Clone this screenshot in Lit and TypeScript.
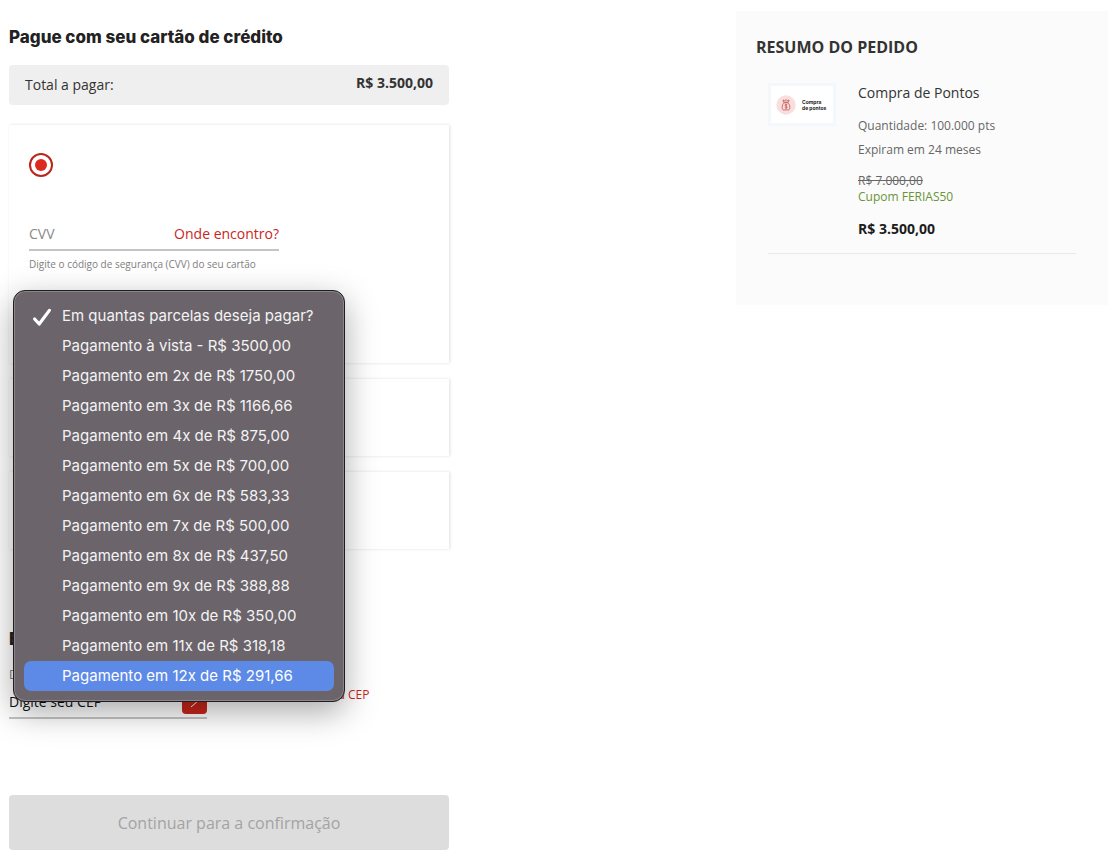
import { LitElement, html, css, svg } from "lit";
import { customElement, property, state } from "lit/decorators.js";
import { classMap } from "lit/directives/class-map.js";

const INSTALLMENTS = [
  "Em quantas parcelas deseja pagar?",
  "Pagamento à vista - R$ 3500,00",
  "Pagamento em 2x de R$ 1750,00",
  "Pagamento em 3x de R$ 1166,66",
  "Pagamento em 4x de R$ 875,00",
  "Pagamento em 5x de R$ 700,00",
  "Pagamento em 6x de R$ 583,33",
  "Pagamento em 7x de R$ 500,00",
  "Pagamento em 8x de R$ 437,50",
  "Pagamento em 9x de R$ 388,88",
  "Pagamento em 10x de R$ 350,00",
  "Pagamento em 11x de R$ 318,18",
  "Pagamento em 12x de R$ 291,66",
];

/** Installment drop-down: the native select plus its open menu. */
@customElement("installment-select")
export class InstallmentSelect extends LitElement {
  static styles = css`
    :host {
      display: block;
      position: relative;
    }
    .native {
      display: block;
      width: 100%;
      height: 32px;
      border: 0;
      border-bottom: 2px solid #c4c4c4;
      background: transparent;
      color: #757575;
      font: 14px/20px "Open Sans", sans-serif;
    }
    .menu {
      position: absolute;
      z-index: 10;
      top: -10px;
      left: -16px;
      box-sizing: border-box;
      width: 332px;
      padding: 10px;
      border: 1px solid #1f1d1f;
      border-radius: 12px;
      background: #6b656b;
      box-shadow:
        inset 0 0 0 1px #8b868b,
        0 10px 32px rgba(0, 0, 0, 0.34);
    }
    .option {
      display: flex;
      align-items: center;
      width: 100%;
      height: 30px;
      padding: 0 8px;
      border: 0;
      border-radius: 7px;
      background: transparent;
      color: #f4f3f4;
      font: 400 15px/20px Inter, "Liberation Sans", sans-serif;
      text-align: left;
      white-space: nowrap;
    }
    .option.active {
      background: #5c8ae6;
      color: #fff;
    }
    .mark {
      flex: 0 0 30px;
      height: 20px;
    }
    .mark svg {
      display: block;
      width: 20px;
      height: 22px;
    }
  `;

  @state() private selected = 0;
  @state() private active = 12;

  render() {
    return html`
      <select class="native" aria-label="Parcelas">
        ${INSTALLMENTS.map((t, i) => html`<option ?selected=${i === this.selected}>${t}</option>`)}
      </select>
      <div class="menu" role="listbox" aria-label="Parcelas">
        ${INSTALLMENTS.map(
          (t, i) => html`<button
            type="button"
            role="option"
            aria-selected=${i === this.selected ? "true" : "false"}
            class=${classMap({ option: true, active: i === this.active })}
            @mouseenter=${() => (this.active = i)}
            @click=${() => (this.selected = i)}
          >
            <span class="mark"
              >${i === this.selected
                ? html`<svg viewBox="0 0 20 22" aria-hidden="true">
                    ${svg`<path d="M2.6 13 L7.2 18 L17.4 4.4" fill="none" stroke="#fff" stroke-width="3.2" stroke-linecap="round" stroke-linejoin="round"/>`}
                  </svg>`
                : ""}</span
            >${t}
          </button>`,
        )}
      </div>
    `;
  }
}

/** Order summary shown beside the payment form. */
@customElement("order-summary")
export class OrderSummary extends LitElement {
  static styles = css`
    :host {
      display: block;
      box-sizing: border-box;
      padding: 24px 32px 51px 20px;
      background: #fbfbfb;
      color: #333;
      font: 12px/16px "Open Sans", sans-serif;
    }
    .title {
      margin: 0 0 24px;
      font-size: 16px;
      line-height: 24px;
      font-weight: 700;
    }
    .item {
      display: grid;
      grid-template-columns: 68px 1fr;
      column-gap: 22px;
      margin-left: 12px;
      padding-bottom: 16px;
      border-bottom: 1px solid #e9e9e9;
    }
    .thumb {
      display: flex;
      align-items: center;
      gap: 6px;
      box-sizing: border-box;
      width: 68px;
      height: 43px;
      padding: 0 5px;
      border: 3px solid #f5f8fb;
      background: #fff;
      color: #222;
      font: 700 5px/6px Inter, sans-serif;
    }
    .thumb svg {
      flex: none;
      width: 20px;
      height: 20px;
    }
    .name {
      margin: 0 0 11px;
      font-size: 14px;
      line-height: 20px;
      font-weight: 400;
    }
    .line {
      margin: 0;
      line-height: 24px;
      color: #666;
    }
    .old {
      display: block;
      margin-top: 11px;
      color: #666;
    }
    .coupon {
      margin: 0 0 16px;
      color: #6a9437;
    }
    .price {
      margin: 0;
      font-size: 14px;
      font-weight: 700;
      color: #1c1c1c;
    }
  `;

  @property() price = "";

  render() {
    return html`
      <h2 class="title">RESUMO DO PEDIDO</h2>
      <div class="item">
        <div class="thumb">
          <svg viewBox="0 0 20 20" aria-hidden="true">
            ${svg`<circle cx="10" cy="10" r="9.7" fill="#f8dedd"/>
            <g fill="none" stroke="#c4504b" stroke-width="0.8" stroke-linejoin="round">
              <path d="M7.6 7.2 L7 5 L8.6 5.6 L10 4.8 L11.4 5.6 L13 5 L12.4 7.2 Z"/>
              <path d="M8 7.8 H12 C14.3 10 14.5 14.7 12.4 14.9 H7.6 C5.5 14.7 5.7 10 8 7.8 Z"/>
              <path d="M11.3 9.8 C10.6 9.2 9 9.3 9 10.3 C9 11.6 11.3 10.9 11.3 12.2 C11.3 13.2 9.5 13.3 8.8 12.6 M10.1 8.9 V13.7"/>
            </g>`}
          </svg>
          <span>Compra<br />de pontos</span>
        </div>
        <div>
          <h3 class="name">Compra de Pontos</h3>
          <p class="line">Quantidade: 100.000 pts</p>
          <p class="line">Expiram em 24 meses</p>
          <s class="old">R$ 7.000,00</s>
          <p class="coupon">Cupom FERIAS50</p>
          <p class="price">${this.price}</p>
        </div>
      </div>
    `;
  }
}

@customElement("app-root")
export class AppRoot extends LitElement {
  static styles = css`
    :host {
      display: block;
      color: #333;
      font: 14px/20px "Open Sans", sans-serif;
    }
    .page {
      display: flex;
      justify-content: space-between;
      align-items: flex-start;
      gap: 24px;
      padding: 11px 12px 7px 9px;
    }
    .pay {
      flex: 0 1 440px;
      min-width: 0;
    }
    .summary {
      flex: 0 1 372px;
    }
    .heading {
      margin: 0;
      color: #222;
      font: 800 17px/24px Inter, sans-serif;
    }
    .pay > .heading:first-child {
      padding-top: 14px;
    }
    .total {
      display: flex;
      justify-content: space-between;
      margin-top: 16px;
      padding: 8px 16px;
      border-radius: 4px;
      background: #efefef;
      line-height: 24px;
    }
    .total strong {
      line-height: 20px;
    }
    .cards {
      display: grid;
      gap: 16px;
      margin-top: 20px;
    }
    .card {
      box-sizing: border-box;
      min-height: 77px;
      padding: 0 20px;
      background: #fff;
      box-shadow: 1px 0 3px rgba(0, 0, 0, 0.13);
    }
    .card.open {
      min-height: 238px;
      padding-top: 28px;
    }
    .radio {
      display: grid;
      place-items: center;
      appearance: none;
      width: 24px;
      height: 24px;
      margin: 0;
      border: 2px solid #b9261c;
      border-radius: 50%;
      background: #fff;
    }
    .radio::before {
      content: "";
      width: 12px;
      height: 12px;
      border-radius: 50%;
      background: #dc2b1e;
    }
    .fields {
      width: 250px;
      max-width: 100%;
    }
    .cvv {
      display: flex;
      align-items: center;
      box-sizing: border-box;
      height: 32px;
      margin-top: 42px;
      border-bottom: 2px solid #c4c4c4;
    }
    .input {
      flex: 1 1 0;
      min-width: 0;
      padding: 0;
      border: 0;
      outline: 0;
      background: transparent;
      color: #111;
      font: 14px/20px "Open Sans", sans-serif;
    }
    .input::placeholder {
      color: #8a8a8a;
      opacity: 1;
    }
    .link {
      color: #c8261c;
      text-decoration: none;
    }
    .hint {
      display: block;
      margin: 5px 0 28px;
      color: #808080;
      font-size: 10px;
      line-height: 16px;
    }
    .address {
      margin-top: 78px;
    }
    .label {
      display: block;
      margin-top: 16px;
      color: #808080;
      font-size: 12px;
      line-height: 16px;
    }
    .row {
      display: flex;
      align-items: flex-start;
      gap: 68px;
      margin-top: 4px;
    }
    .cep {
      display: flex;
      align-items: center;
      flex: 0 0 198px;
      min-width: 0;
      box-sizing: border-box;
      height: 32px;
      border-bottom: 2px solid #c4c4c4;
    }
    .cep .input::placeholder {
      color: #111;
    }
    .go {
      flex: none;
      width: 25px;
      height: 24px;
      padding: 0;
      border: 0;
      border-radius: 4px;
      background: #c8261c;
    }
    .go svg {
      display: block;
      width: 25px;
      height: 24px;
    }
    .small {
      font-size: 12px;
      line-height: 16px;
    }
    .submit {
      display: block;
      width: 100%;
      height: 55px;
      margin-top: 76px;
      border: 0;
      border-radius: 4px;
      background: #ddd;
      color: #a3a3a3;
      font: 16px/24px "Open Sans", sans-serif;
    }
  `;

  render() {
    return html`
      <div class="page">
        <main class="pay">
          <h1 class="heading">Pague com seu cartão de crédito</h1>
          <div class="total"><span>Total a pagar:</span><strong>R$ 3.500,00</strong></div>
          <div class="cards">
            <section class="card open">
              <input class="radio" type="radio" name="card" aria-label="Cartão de crédito" checked />
              <div class="fields">
                <div class="cvv">
                  <input id="cvv" class="input" placeholder="CVV" aria-label="CVV" aria-describedby="cvv-hint" />
                  <a class="link" href="#">Onde encontro?</a>
                </div>
                <small id="cvv-hint" class="hint">Digite o código de segurança (CVV) do seu cartão</small>
                <installment-select></installment-select>
              </div>
            </section>
            <section class="card"></section>
            <section class="card"></section>
          </div>
          <section class="address">
            <h2 class="heading">Endereço</h2>
            <label class="label" for="cep">Digite seu CEP</label>
            <div class="row">
              <div class="cep">
                <input id="cep" class="input" placeholder="Digite seu CEP" />
                <button class="go" type="button" aria-label="Buscar CEP">
                  <svg viewBox="0 0 25 24" aria-hidden="true">
                    <path d="M9 5 L16.5 10.5 L9 17" fill="none" stroke="#fff" stroke-width="1" />
                  </svg>
                </button>
              </div>
              <a class="link small" href="#">Não sei meu CEP</a>
            </div>
          </section>
          <button class="submit" type="button" disabled>Continuar para a confirmação</button>
        </main>
        <order-summary class="summary" price="R$ 3.500,00"></order-summary>
      </div>
    `;
  }
}
